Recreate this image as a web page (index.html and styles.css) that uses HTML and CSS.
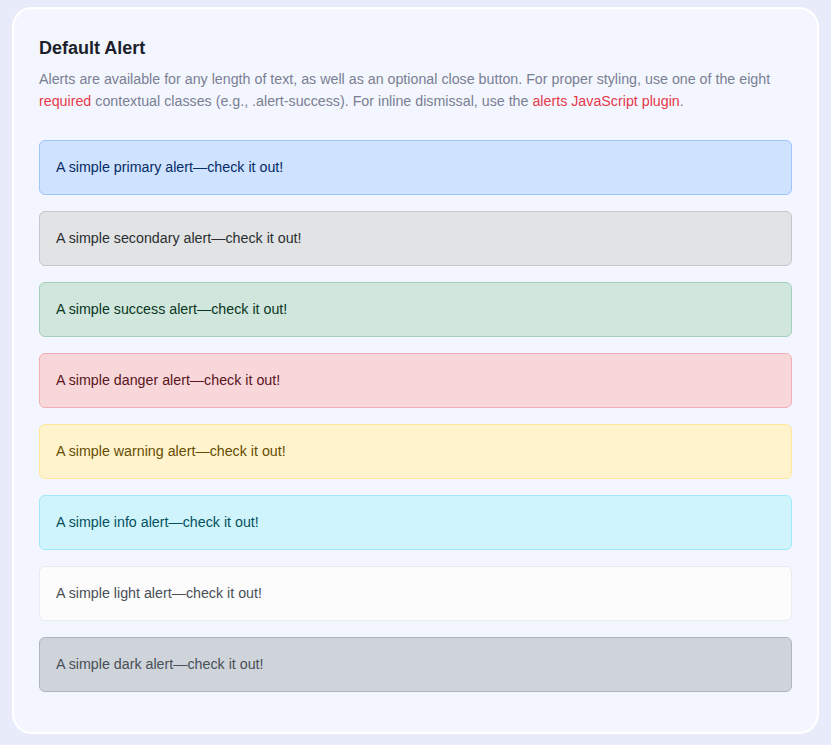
FILE: index.html
```html
<!DOCTYPE html>
<html lang="en">
<head>
<meta charset="utf-8">
<title>Default Alert</title>
<link rel="stylesheet" href="styles.css">
</head>
<body>
<div class="card">
  <h5 class="card-title">Default Alert</h5>
  <p class="card-desc">Alerts are available for any length of text, as well as an optional close button. For proper styling, use one of the eight <span class="link">required</span> contextual classes (e.g., .alert-success). For inline dismissal, use the <span class="link">alerts JavaScript plugin</span>.</p>
  <div class="alert alert-primary">A simple primary alert—check it out!</div>
  <div class="alert alert-secondary">A simple secondary alert—check it out!</div>
  <div class="alert alert-success">A simple success alert—check it out!</div>
  <div class="alert alert-danger">A simple danger alert—check it out!</div>
  <div class="alert alert-warning">A simple warning alert—check it out!</div>
  <div class="alert alert-info">A simple info alert—check it out!</div>
  <div class="alert alert-light">A simple light alert—check it out!</div>
  <div class="alert alert-dark">A simple dark alert—check it out!</div>
</div>
</body>
</html>
```
FILE: styles.css
```css
html, body {
  margin: 0;
  padding: 0;
}
body {
  background: #e8ebfa;
  font-family: "Liberation Sans", Arial, sans-serif;
  font-size: 14.25px;
  padding: 7px 12px 11px 12px;
}
.card {
  background: #f3f6fe;
  border: 2px solid #ffffff;
  border-radius: 20px;
  padding: 29px 25px 24px 25px;
}
.card-title {
  margin: 0;
  font-size: 18px;
  line-height: 21.6px;
  font-weight: 700;
  color: #1d1f2b;
}
.card-desc {
  margin: 8px 0 28px 0;
  font-size: 14.25px;
  line-height: 22px;
  color: #7a7f93;
}
.link {
  color: #e5394b;
}
.alert {
  border: 1px solid transparent;
  border-radius: 6px;
  padding: 16px;
  line-height: 21px;
  margin-bottom: 16px;
}
.alert-primary { background: #cfe2ff; border-color: #9ec5fe; color: #052c65; }
.alert-secondary { background: #e2e3e5; border-color: #c4c8cb; color: #2b2f32; }
.alert-success { background: #d1e7dd; border-color: #a3cfbb; color: #0a3622; }
.alert-danger { background: #f8d7da; border-color: #f1aeb5; color: #58151c; }
.alert-warning { background: #fff3cd; border-color: #ffe69c; color: #664d03; }
.alert-info { background: #cff4fc; border-color: #9eeaf9; color: #055160; }
.alert-light { background: #fcfcfd; border-color: #e9ecef; color: #495057; }
.alert-dark { background: #ced4da; border-color: #adb5bd; color: #495057; }
```
